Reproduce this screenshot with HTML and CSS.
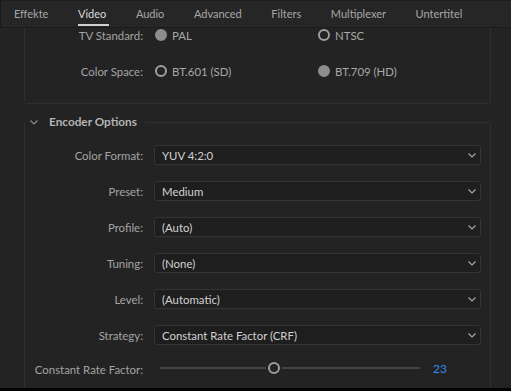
FILE: index.html
```html
<!DOCTYPE html>
<html>
<head>
	<meta charset="utf-8">
	<title>Export Settings - Video</title>
	<link rel="stylesheet" href="styles.css">
</head>
<body>
	<div class="tabs">
		<span class="tab">Effekte</span>
		<span class="tab tab-active">Video</span>
		<span class="tab">Audio</span>
		<span class="tab">Advanced</span>
		<span class="tab">Filters</span>
		<span class="tab">Multiplexer</span>
		<span class="tab">Untertitel</span>
	</div>

	<div class="pane">
		<fieldset class="group group-basic">
			<div class="form">
				<div class="label">TV Standard:</div>
				<div class="radios">
					<label class="option"><span class="radio radio-on"></span>PAL</label>
					<label class="option"><span class="radio"></span>NTSC</label>
				</div>
				<div class="label">Color Space:</div>
				<div class="radios">
					<label class="option"><span class="radio"></span>BT.601 (SD)</label>
					<label class="option"><span class="radio radio-on"></span>BT.709 (HD)</label>
				</div>
			</div>
		</fieldset>

		<fieldset class="group group-encoder">
			<legend class="group-title">
				<svg class="chev chev-title" width="8" height="5" viewBox="0 0 8 5"><path d="M0.5 0.5 L4 4 L7.5 0.5" fill="none" stroke="currentColor" stroke-width="1.2"/></svg>
				Encoder Options
			</legend>
			<div class="form">
				<div class="label">Color Format:</div>
				<div class="dropdown">
					<select class="select"><option>YUV 4:2:0</option></select>
					<svg class="chev" width="8" height="5" viewBox="0 0 8 5"><path d="M0.5 0.5 L4 4 L7.5 0.5" fill="none" stroke="currentColor" stroke-width="1.2"/></svg>
				</div>
				<div class="label">Preset:</div>
				<div class="dropdown">
					<select class="select"><option>Medium</option></select>
					<svg class="chev" width="8" height="5" viewBox="0 0 8 5"><path d="M0.5 0.5 L4 4 L7.5 0.5" fill="none" stroke="currentColor" stroke-width="1.2"/></svg>
				</div>
				<div class="label">Profile:</div>
				<div class="dropdown">
					<select class="select"><option>(Auto)</option></select>
					<svg class="chev" width="8" height="5" viewBox="0 0 8 5"><path d="M0.5 0.5 L4 4 L7.5 0.5" fill="none" stroke="currentColor" stroke-width="1.2"/></svg>
				</div>
				<div class="label">Tuning:</div>
				<div class="dropdown">
					<select class="select"><option>(None)</option></select>
					<svg class="chev" width="8" height="5" viewBox="0 0 8 5"><path d="M0.5 0.5 L4 4 L7.5 0.5" fill="none" stroke="currentColor" stroke-width="1.2"/></svg>
				</div>
				<div class="label">Level:</div>
				<div class="dropdown">
					<select class="select"><option>(Automatic)</option></select>
					<svg class="chev" width="8" height="5" viewBox="0 0 8 5"><path d="M0.5 0.5 L4 4 L7.5 0.5" fill="none" stroke="currentColor" stroke-width="1.2"/></svg>
				</div>
				<div class="label">Strategy:</div>
				<div class="dropdown">
					<select class="select"><option>Constant Rate Factor (CRF)</option></select>
					<svg class="chev" width="8" height="5" viewBox="0 0 8 5"><path d="M0.5 0.5 L4 4 L7.5 0.5" fill="none" stroke="currentColor" stroke-width="1.2"/></svg>
				</div>
				<div class="label label-crf">Constant Rate Factor:</div>
				<div class="slider-row">
					<input class="slider" type="range" min="0" max="53" value="23">
					<span class="slider-value">23</span>
				</div>
			</div>
		</fieldset>
	</div>

	<div class="edge"></div>
</body>
</html>
```

FILE: styles.css
```css
html, body {
	margin: 0;
	padding: 0;
}
body {
	width: 511px;
	height: 391px;
	overflow: hidden;
	background: #232323;
	color: #a3a3a3;
	font-family: "Lato", "Noto Sans", sans-serif;
	font-size: 11.4px;
}

/* tab strip */
.tabs {
	display: flex;
	box-sizing: border-box;
	height: 28px;
	padding-left: 0;
	background: #262626;
	border: 1px solid #1b1b1b;
	border-right: none;
	border-top-color: #1e1e1e;
	font-size: 11px;
}
.tab {
	padding: 0 14px 0 13px;
	margin-right: 2.6px;
	line-height: 26px;
	color: #a6a6a6;
	position: relative;
}
.tab-active {
	color: #dadada;
}
.tab-active::after {
	content: "";
	position: absolute;
	left: 13px;
	right: 11px;
	bottom: 1px;
	height: 2px;
	background: #cfcfcf;
}

/* scrolling area */
.pane {
	height: 360px;
	overflow: hidden;
}
.group {
	box-sizing: border-box;
	width: 467px;
	margin: 0 0 0 24px;
	padding: 0 8px 0 0;
	border: 1px solid #2f2f2f;
	border-radius: 2px;
	min-inline-size: 0;
}
.group-basic {
	margin-top: -12px;
	padding-bottom: 14px;
}
.group-encoder {
	margin-top: 10px;
	padding-top: 7px;
}
.group-title {
	display: flex;
	align-items: center;
	gap: 11px;
	padding: 0 8px 0 5px;
	line-height: 16px;
	font-size: 11.8px;
	font-weight: bold;
	color: #b4b4b4;
}
.chev {
	display: block;
	color: #a8a8a8;
}
.chev-title {
	color: #8c8c8c;
}

.form {
	display: grid;
	grid-template-columns: 118px 1fr;
	grid-auto-rows: 36px;
	column-gap: 11px;
	align-items: center;
}
.label {
	text-align: right;
	color: #a3a3a3;
}
.label-crf {
	white-space: nowrap;
	margin-top: -4px;
}

/* radio buttons */
.radios {
	display: flex;
}
.option {
	display: flex;
	align-items: center;
	gap: 5px;
	width: 163px;
	color: #a8a8a8;
}
.radio {
	box-sizing: border-box;
	width: 12px;
	height: 12px;
	margin-left: 1px;
	border-radius: 50%;
	border: 2px solid #a0a0a0;
}
.radio-on {
	border-color: #8e8e8e;
	background: #8e8e8e;
}

/* dropdowns */
.dropdown {
	position: relative;
}
.select {
	appearance: none;
	-webkit-appearance: none;
	display: block;
	box-sizing: border-box;
	width: 327px;
	height: 20px;
	margin: 0;
	padding: 0 0 0 7px;
	background: #1e1e1e;
	border: 1px solid #353535;
	border-radius: 3px;
	color: #d2d2d2;
	font-family: inherit;
	font-size: 11.4px;
	outline: none;
}
.dropdown .chev {
	position: absolute;
	right: 6px;
	top: 8px;
	pointer-events: none;
}

/* slider */
.slider-row {
	display: flex;
	align-items: center;
	gap: 13px;
	margin-top: -6px;
}
.slider {
	-webkit-appearance: none;
	appearance: none;
	width: 260px;
	height: 14px;
	margin: 0 0 0 6px;
	background: transparent;
}
.slider::-webkit-slider-runnable-track {
	height: 2px;
	background: #444;
}
.slider::-webkit-slider-thumb {
	-webkit-appearance: none;
	box-sizing: border-box;
	width: 12px;
	height: 12px;
	margin-top: -5px;
	border-radius: 50%;
	border: 2px solid #9c9c9c;
	background: #232323;
	box-shadow: 0 0 0 2px #232323;
}
.slider-value {
	color: #2f8ce8;
	font-size: 12px;
}

.edge {
	height: 3px;
	background: #000;
}
```
